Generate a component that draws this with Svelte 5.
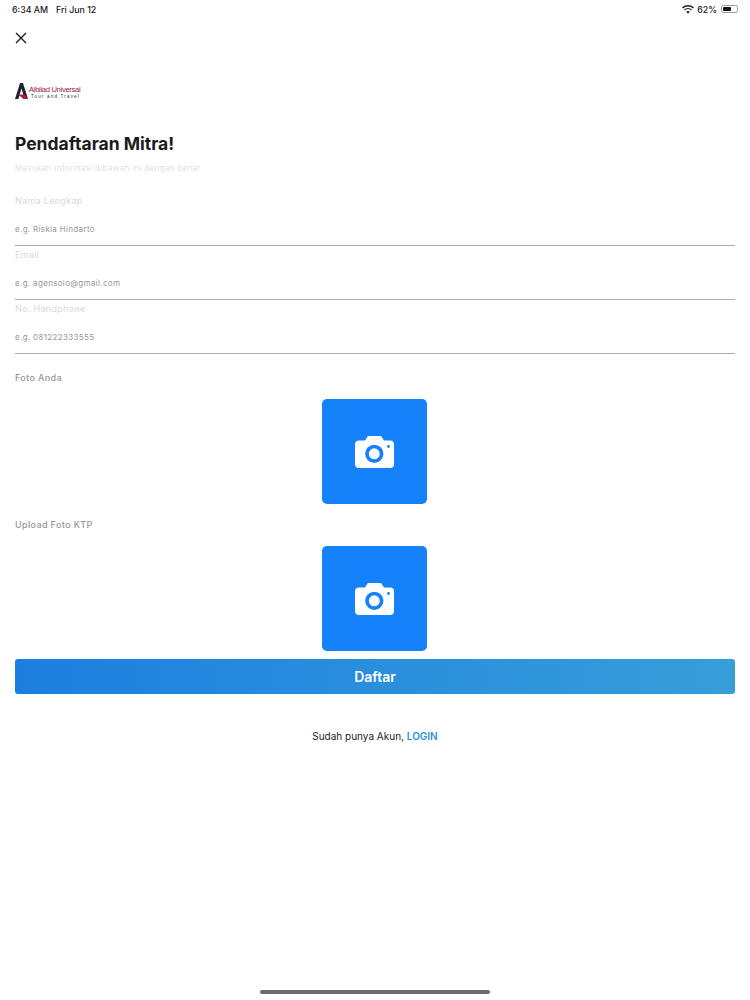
<script>
  const fields = [
    { label: 'Nama Lengkap', placeholder: 'e.g. Riskia Hindarto' },
    { label: 'Email', placeholder: 'e.g. agensolo@gmail.com' },
    { label: 'No. Handphone', placeholder: 'e.g. 081222333555' }
  ];
  const uploads = ['Foto Anda', 'Upload Foto KTP'];
</script>

<div class="page">
  <header class="status">
    <div class="clock"><span>6:34 AM</span><span>Fri Jun 12</span></div>
    <div class="sys">
      <svg class="wifi" width="12" height="9" viewBox="0 0 12 9" aria-hidden="true">
        <path d="M6 8.8 4.2 6.8a2.6 2.6 0 0 1 3.6 0z" fill="#222" />
        <path d="M2.9 5.5 2 4.5a5.8 5.8 0 0 1 8 0l-.9 1a4.5 4.5 0 0 0-6.2 0z" fill="#222" />
        <path d="M1 3.5 0 2.5a8.7 8.7 0 0 1 12 0l-1 1a7.3 7.3 0 0 0-10 0z" fill="#222" />
      </svg>
      <span>62%</span>
      <span class="battery"><span class="charge"></span></span>
    </div>
  </header>

  <main class="content">
    <button class="close" aria-label="Tutup">
      <svg width="12" height="12" viewBox="0 0 12 12"><path d="M1 1l10 10M11 1 1 11" stroke="#1a1a1a" stroke-width="1.4" fill="none" /></svg>
    </button>

    <div class="logo">
      <svg width="13" height="16" viewBox="0 0 13 16" aria-hidden="true">
        <path d="M0 16 5 0h3l5 16H9.6L6.5 5.500 3.400 16z" fill="#1f2230" />
        <path d="M3 11.500h6.500l3.500 4.500H8.500z" fill="#a3203c" />
      </svg>
      <div class="brand">
        <span class="brand-top">Albilad Universal</span>
        <span class="brand-sub">Tour and Travel</span>
      </div>
    </div>

    <h1>Pendaftaran Mitra!</h1>
    <p class="lead">Masukan Informasi dibawah ini dengan benar</p>

    <div class="fields">
      {#each fields as f}
        <div class="field">
          <span class="label">{f.label}</span>
          <span class="value">{f.placeholder}</span>
        </div>
      {/each}
    </div>

    {#each uploads as u}
      <section class="upload">
        <div class="upload-label">{u}</div>
        <div class="tile">
          <svg width="39" height="32" viewBox="0 0 39 32" aria-hidden="true">
            <path d="M4 4.500h6l2.300-3.700A1.500 1.500 0 0 1 13.500 0h12a1.500 1.500 0 0 1 1.200.8L29 4.500h6a4 4 0 0 1 4 4V28a4 4 0 0 1-4 4H4a4 4 0 0 1-4-4V8.500a4 4 0 0 1 4-4z" fill="#fff" />
            <circle cx="19.300" cy="17.800" r="7.300" fill="none" stroke="#1581fb" stroke-width="3.700" />
            <circle cx="33.500" cy="10.500" r="1.400" fill="#1581fb" />
          </svg>
        </div>
      </section>
    {/each}

    <button class="submit">Daftar</button>

    <p class="login">Sudah punya Akun, <span class="link">LOGIN</span></p>
  </main>

  <div class="home"></div>
</div>

<style>
  :global(body) {
    margin: 0;
    background: #fff;
  }
  .page {
    width: 750px;
    height: 1000px;
    position: relative;
    overflow: hidden;
    font-family: Inter, "Liberation Sans", sans-serif;
    color: #1b1b1f;
  }
  .status {
    height: 18px;
    display: flex;
    align-items: center;
    justify-content: space-between;
    padding: 0 12px;
    font-size: 8.800px;
    font-weight: 500;
    color: #222;
  }
  .clock {
    display: flex;
    gap: 8px;
  }
  .sys {
    display: flex;
    align-items: center;
    gap: 3px;
  }
  .battery {
    width: 17px;
    height: 8px;
    border: 1px solid #999;
    border-radius: 2.500px;
    padding: 1px;
    box-sizing: border-box;
    display: flex;
    margin-left: 1px;
  }
  .charge {
    width: 62%;
    background: #111;
    border-radius: 1px;
  }
  .content {
    padding: 0 15px;
  }
  .close {
    display: block;
    border: 0;
    background: none;
    padding: 0;
    margin: 14px 0 0;
    width: 12px;
    height: 12px;
  }
  .close svg {
    display: block;
  }
  .logo {
    margin-top: 38px;
    height: 18px;
    display: flex;
    align-items: center;
    gap: 1px;
  }
  .brand {
    display: flex;
    flex-direction: column;
    margin-top: 2px;
    font-family: "Liberation Sans", sans-serif;
  }
  .brand-top {
    font-size: 7.700px;
    letter-spacing: -0.350px;
    color: #a3203c;
    line-height: 9px;
  }
  .brand-sub {
    font-size: 4.500px;
    letter-spacing: 1.200px;
    color: #333;
    line-height: 5px;
    margin-left: 2px;
  }
  h1 {
    margin: 32px 0 0;
    font-size: 17.500px;
    line-height: 24px;
    font-weight: 700;
    color: #1b1b1f;
  }
  .lead {
    margin: 6px 0 0;
    font-size: 8px;
    line-height: 12px;
    letter-spacing: 0.340px;
    color: #dfdfe3;
  }
  .fields {
    margin-top: 18px;
  }
  .field {
    height: 54px;
    box-sizing: border-box;
    border-bottom: 1px solid #ababab;
    display: flex;
    flex-direction: column;
    font-size: 9px;
    letter-spacing: 0.300px;
  }
  .label {
    margin-top: 3px;
    line-height: 12px;
    color: #d8d8dc;
  }
  .value {
    margin-top: 16px;
    line-height: 12px;
    font-size: 8px;
    letter-spacing: 0.330px;
    color: #96969c;
  }
  .upload-label {
    font-size: 9px;
    font-weight: 500;
    letter-spacing: 0.360px;
    line-height: 12px;
    color: #96969c;
  }
  .fields + .upload {
    margin-top: 18px;
  }
  .upload + .upload {
    margin-top: 15px;
  }
  .tile {
    width: 105px;
    height: 105px;
    margin: 15px auto 0;
    border-radius: 5px;
    background: #1581fb;
    display: flex;
    align-items: center;
    justify-content: center;
    position: relative;
    left: -0.500px;
  }
  .submit {
    display: block;
    width: 100%;
    height: 35px;
    margin-top: 8px;
    border: 0;
    border-radius: 3px;
    background: linear-gradient(90deg, #1c7fe0, #379ed9);
    color: #fff;
    font: 600 14px Inter, "Liberation Sans", sans-serif;
  }
  .login {
    margin: 36px 0 0;
    text-align: center;
    font-size: 10px;
    line-height: 12px;
    color: #1b1b1f;
  }
  .link {
    color: #2a93d5;
    font-weight: 600;
  }
  .home {
    position: absolute;
    left: 260px;
    bottom: 6px;
    width: 230px;
    height: 4px;
    border-radius: 2px;
    background: #6a6a6a;
  }
</style>
